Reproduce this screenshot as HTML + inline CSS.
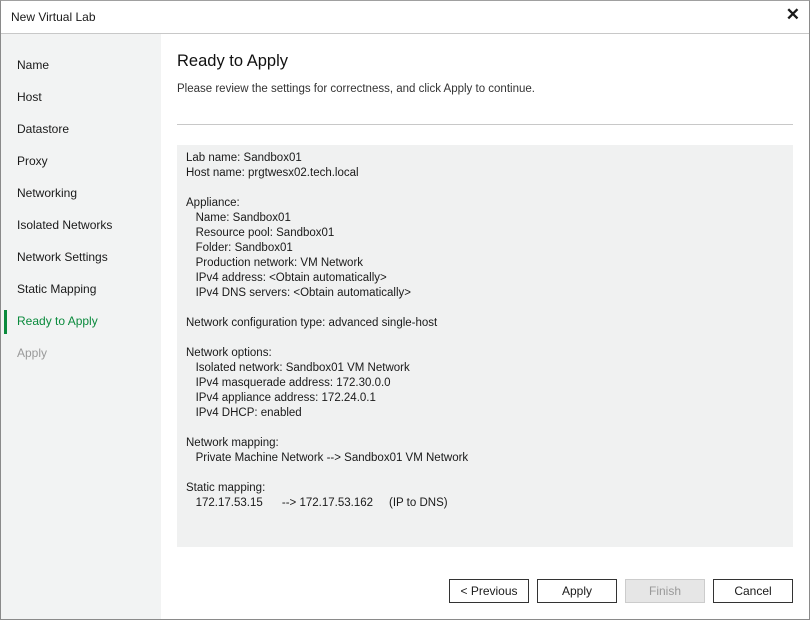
<!DOCTYPE html>
<html><head><meta charset="utf-8"><style>
*{margin:0;padding:0;box-sizing:border-box}
body{width:810px;height:620px;overflow:hidden;background:#fff;font-family:"Liberation Sans",sans-serif;font-size:12px;color:#1a1a1a;position:relative}
.frame{position:absolute;left:0;top:0;width:810px;height:620px;border:1px solid #8a8a8a;border-top:1px solid #a0a0a0}
.title{position:absolute;left:11px;top:10px;font-size:12px}
.close{position:absolute;right:10px;top:5px;font-size:17px;font-weight:bold}
.tline{position:absolute;left:1px;right:1px;top:33px;height:1px;background:#c8c8c8}
.side{position:absolute;left:1px;top:34px;width:160px;bottom:1px;background:#f2f3f3}
.side div{position:absolute;left:16px;font-size:12px}
.mark{position:absolute;left:4px;top:310px;width:3px;height:24px;background:#0a8a3c}
h1{position:absolute;left:177px;top:52px;font-size:16.5px;font-weight:normal;color:#111}
.sub{position:absolute;left:177px;top:83px;color:#333;font-size:11.5px}
.hr{position:absolute;left:177px;width:616px;top:124px;height:1px;background:#c8c8c8}
.panel{position:absolute;left:177px;top:145px;width:616px;height:402px;background:#f0f1f1;padding:6px 9px;line-height:15px;font-size:11.5px;white-space:pre}
.btn{position:absolute;top:579px;height:24px;border:1px solid #333;background:#fff;text-align:center;line-height:22px;font-size:12px}
</style></head><body>
<div class="frame"></div>
<div class="title">New Virtual Lab</div>
<div class="close">✕</div>
<div class="tline"></div>
<div class="side">
<div style="top:24px">Name</div>
<div style="top:56px">Host</div>
<div style="top:88px">Datastore</div>
<div style="top:120px">Proxy</div>
<div style="top:152px">Networking</div>
<div style="top:184px">Isolated Networks</div>
<div style="top:216px">Network Settings</div>
<div style="top:248px">Static Mapping</div>
<div style="top:280px;color:#0a8a3c">Ready to Apply</div>
<div style="top:312px;color:#999">Apply</div>
</div>
<div class="mark"></div>
<h1>Ready to Apply</h1>
<div class="sub">Please review the settings for correctness, and click Apply to continue.</div>
<div class="hr"></div>
<div class="panel">Lab name: Sandbox01
Host name: prgtwesx02.tech.local

Appliance:
   Name: Sandbox01
   Resource pool: Sandbox01
   Folder: Sandbox01
   Production network: VM Network
   IPv4 address: &lt;Obtain automatically&gt;
   IPv4 DNS servers: &lt;Obtain automatically&gt;

Network configuration type: advanced single-host

Network options:
   Isolated network: Sandbox01 VM Network
   IPv4 masquerade address: 172.30.0.0
   IPv4 appliance address: 172.24.0.1
   IPv4 DHCP: enabled

Network mapping:
   Private Machine Network --&gt; Sandbox01 VM Network

Static mapping:
   172.17.53.15      --&gt; 172.17.53.162     (IP to DNS)</div>
<div class="btn" style="left:449px;width:80px">&lt; Previous</div>
<div class="btn" style="left:537px;width:80px">Apply</div>
<div class="btn" style="left:625px;width:80px;border-color:#ccc;background:#e6e6e6;color:#999">Finish</div>
<div class="btn" style="left:713px;width:80px">Cancel</div>
</body></html>
